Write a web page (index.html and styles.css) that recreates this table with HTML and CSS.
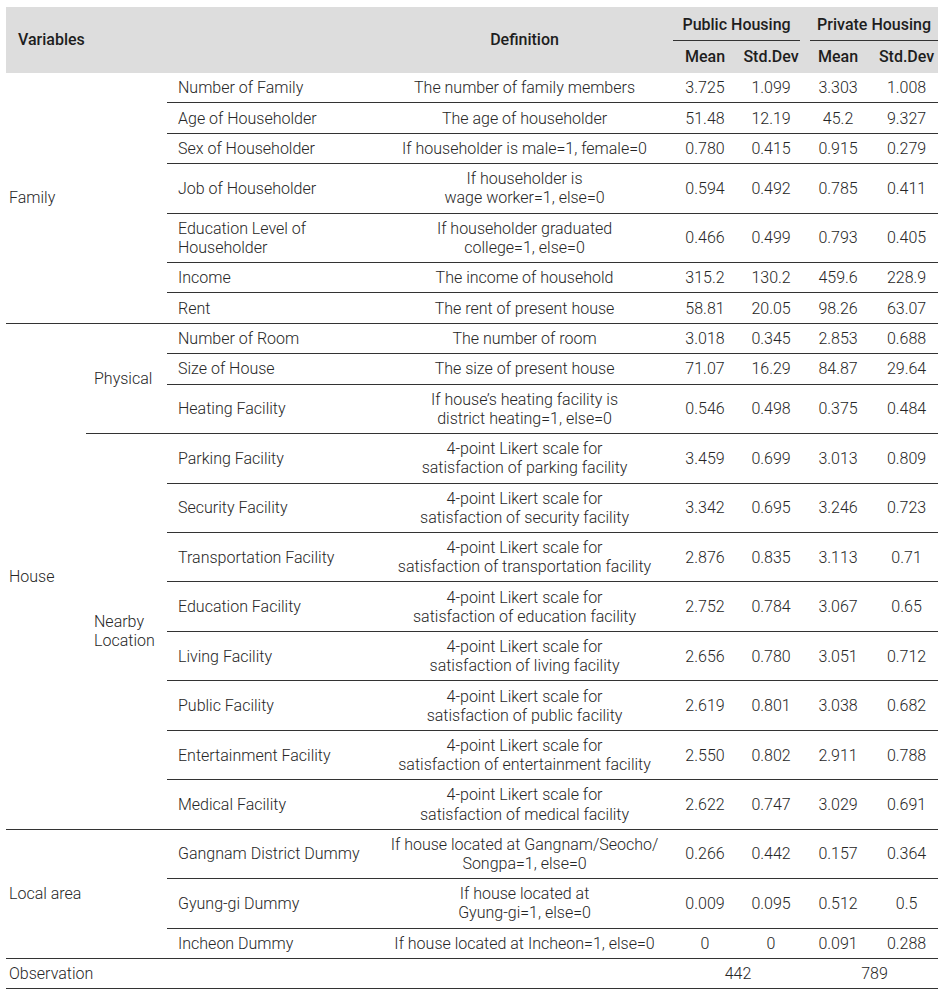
FILE: index.html
```html
<!DOCTYPE html>
<html>
<head>
<meta charset="utf-8">
<link rel="stylesheet" href="styles.css">
</head>
<body>
<table class="stats">
  <colgroup>
    <col class="c1"><col class="c2"><col class="c3"><col class="c4">
    <col class="c5"><col class="c6"><col class="c7"><col class="c8">
  </colgroup>
  <thead>
    <tr class="h1">
      <th colspan="3" rowspan="2" class="hvar">Variables</th>
      <th rowspan="2" class="hdef">Definition</th>
      <th colspan="2" class="hgrp"><div class="grp pub">Public Housing</div></th>
      <th colspan="2" class="hgrp"><div class="grp priv">Private Housing</div></th>
    </tr>
    <tr class="h2">
      <th>Mean</th><th>Std.Dev</th><th>Mean</th><th>Std.Dev</th>
    </tr>
  </thead>
  <tbody>
    <tr>
      <td colspan="2" rowspan="7" class="cat bb">Family</td>
      <td class="var">Number of Family</td><td class="def">The number of family members</td>
      <td>3.725</td><td>1.099</td><td>3.303</td><td>1.008</td>
    </tr>
    <tr><td class="var">Age of Householder</td><td class="def">The age of householder</td>
      <td>51.48</td><td>12.19</td><td>45.2</td><td>9.327</td></tr>
    <tr><td class="var">Sex of Householder</td><td class="def">If householder is male=1, female=0</td>
      <td>0.780</td><td>0.415</td><td>0.915</td><td>0.279</td></tr>
    <tr><td class="var">Job of Householder</td><td class="def">If householder is<br>wage worker=1, else=0</td>
      <td>0.594</td><td>0.492</td><td>0.785</td><td>0.411</td></tr>
    <tr><td class="var">Education Level of<br>Householder</td><td class="def">If householder graduated<br>college=1, else=0</td>
      <td>0.466</td><td>0.499</td><td>0.793</td><td>0.405</td></tr>
    <tr><td class="var">Income</td><td class="def">The income of household</td>
      <td>315.2</td><td>130.2</td><td>459.6</td><td>228.9</td></tr>
    <tr><td class="var">Rent</td><td class="def">The rent of present house</td>
      <td>58.81</td><td>20.05</td><td>98.26</td><td>63.07</td></tr>

    <tr>
      <td rowspan="11" class="cat bb">House</td>
      <td rowspan="3" class="sub bb">Physical</td>
      <td class="var">Number of Room</td><td class="def">The number of room</td>
      <td>3.018</td><td>0.345</td><td>2.853</td><td>0.688</td>
    </tr>
    <tr><td class="var">Size of House</td><td class="def">The size of present house</td>
      <td>71.07</td><td>16.29</td><td>84.87</td><td>29.64</td></tr>
    <tr><td class="var">Heating Facility</td><td class="def">If house’s heating facility is<br>district heating=1, else=0</td>
      <td>0.546</td><td>0.498</td><td>0.375</td><td>0.484</td></tr>
    <tr>
      <td rowspan="8" class="sub bb">Nearby<br>Location</td>
      <td class="var">Parking Facility</td><td class="def">4-point Likert scale for<br>satisfaction of parking facility</td>
      <td>3.459</td><td>0.699</td><td>3.013</td><td>0.809</td>
    </tr>
    <tr><td class="var">Security Facility</td><td class="def">4-point Likert scale for<br>satisfaction of security facility</td>
      <td>3.342</td><td>0.695</td><td>3.246</td><td>0.723</td></tr>
    <tr><td class="var">Transportation Facility</td><td class="def">4-point Likert scale for<br>satisfaction of transportation facility</td>
      <td>2.876</td><td>0.835</td><td>3.113</td><td>0.71</td></tr>
    <tr><td class="var">Education Facility</td><td class="def">4-point Likert scale for<br>satisfaction of education facility</td>
      <td>2.752</td><td>0.784</td><td>3.067</td><td>0.65</td></tr>
    <tr><td class="var">Living Facility</td><td class="def">4-point Likert scale for<br>satisfaction of living facility</td>
      <td>2.656</td><td>0.780</td><td>3.051</td><td>0.712</td></tr>
    <tr><td class="var">Public Facility</td><td class="def">4-point Likert scale for<br>satisfaction of public facility</td>
      <td>2.619</td><td>0.801</td><td>3.038</td><td>0.682</td></tr>
    <tr><td class="var">Entertainment Facility</td><td class="def">4-point Likert scale for<br>satisfaction of entertainment facility</td>
      <td>2.550</td><td>0.802</td><td>2.911</td><td>0.788</td></tr>
    <tr><td class="var">Medical Facility</td><td class="def">4-point Likert scale for<br>satisfaction of medical facility</td>
      <td>2.622</td><td>0.747</td><td>3.029</td><td>0.691</td></tr>

    <tr>
      <td colspan="2" rowspan="3" class="cat bb">Local area</td>
      <td class="var">Gangnam District Dummy</td><td class="def">If house located at Gangnam/Seocho/<br>Songpa=1, else=0</td>
      <td>0.266</td><td>0.442</td><td>0.157</td><td>0.364</td>
    </tr>
    <tr><td class="var">Gyung-gi Dummy</td><td class="def">If house located at<br>Gyung-gi=1, else=0</td>
      <td>0.009</td><td>0.095</td><td>0.512</td><td>0.5</td></tr>
    <tr><td class="var">Incheon Dummy</td><td class="def">If house located at Incheon=1, else=0</td>
      <td>0</td><td>0</td><td>0.091</td><td>0.288</td></tr>

    <tr class="obs">
      <td colspan="4" class="cat bb">Observation</td>
      <td colspan="2" class="obsn pubn">442</td>
      <td colspan="2" class="obsn privn">789</td>
    </tr>
  </tbody>
</table>
</body>
</html>
```

FILE: styles.css
```css
html, body {
  background: #ffffff;
}
body {
  margin: 7px 6px;
  font-family: Roboto, "Liberation Sans", sans-serif;
  font-weight: 300;
  color: #262626;
}
.stats {
  width: 932px;
  border-collapse: collapse;
  table-layout: fixed;
  font-size: 16px;
  line-height: 19.1px;
}
.c1 { width: 80px; }
.c2 { width: 81px; }
.c3 { width: 213px; }
.c4 { width: 289px; }
.c5 { width: 72px; }
.c6 { width: 60px; }
.c7 { width: 74px; }
.c8 { width: 63px; }

thead th {
  background: #dddddd;
  font-weight: 500;
  color: #1e1e1e;
  padding: 0;
  text-align: center;
}
.h1 th { height: 34px; }
.h2 th { height: 32px; }
.hvar { text-align: left; padding-left: 12px; }
.hgrp { vertical-align: bottom; }
.grp {
  border-bottom: 1px solid #333333;
  height: 32px;
  line-height: 32px;
  box-sizing: border-box;
}
.grp.pub { margin-left: 4px; margin-right: 1px; }
.grp.priv { margin-left: 9px; }

tbody td {
  padding: 5.15px 0;
  text-align: center;
  vertical-align: middle;
  border-bottom: 1px solid #333333;
}
tbody td.cat, tbody td.sub {
  text-align: left;
  border-bottom: none;
}
tbody td.bb { border-bottom: 1px solid #333333; }
td.cat { padding-left: 3px; }
td.sub { padding-left: 8px; }
td.var { text-align: left; padding-left: 11px; }
td.def { text-align: center; }
.obs td { border-bottom: 1px solid #333333; }
.pubn { padding-left: 6px; }
.privn { padding-left: 10px; }
```
